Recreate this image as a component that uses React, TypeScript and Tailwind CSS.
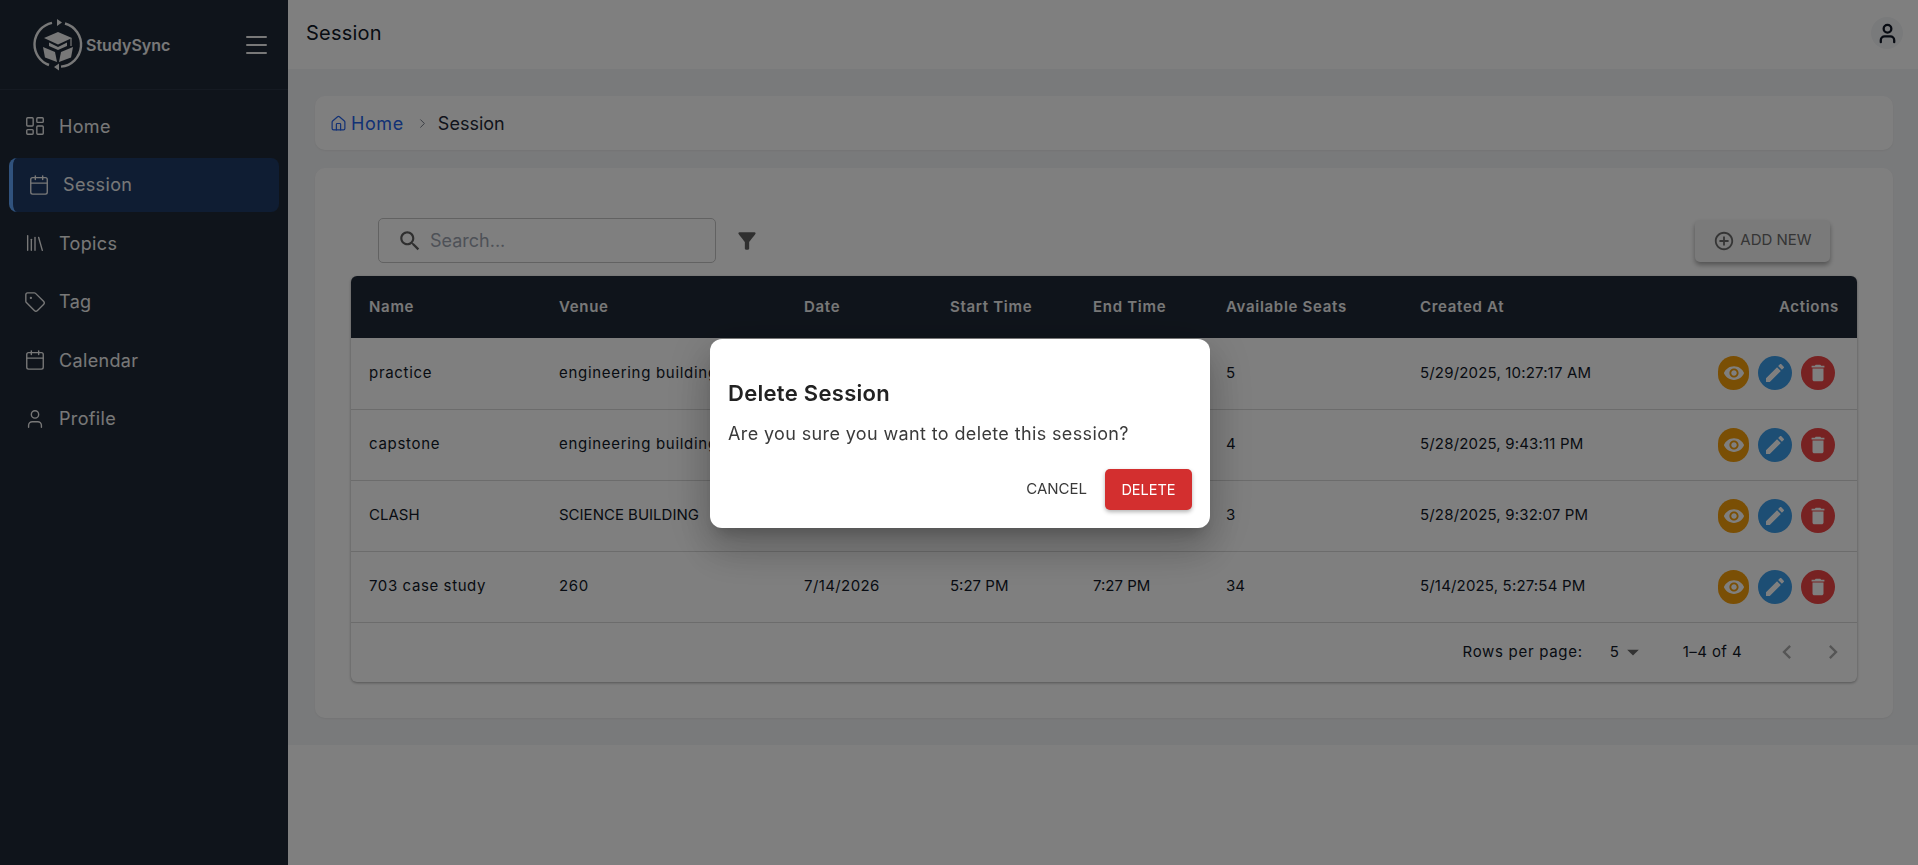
/**
 * Session list page with the delete confirmation dialog open
 */
import { Calendar, ChevronRight, House, LayoutDashboard, Library, Tag, User } from 'lucide-react';

const font = { fontFamily: 'Inter, "Liberation Sans", sans-serif' };

const navItems = [
  { label: 'Home', icon: LayoutDashboard },
  { label: 'Session', icon: Calendar, active: true },
  { label: 'Topics', icon: Library },
  { label: 'Tag', icon: Tag },
  { label: 'Calendar', icon: Calendar },
  { label: 'Profile', icon: User },
];

const rows = [
  { name: 'practice', venue: 'engineering building', date: '', start: '', end: '', seats: '5', created: '5/29/2025, 10:27:17 AM', track: 'tracking-[0.7px]' },
  { name: 'capstone', venue: 'engineering building', date: '', start: '', end: '', seats: '4', created: '5/28/2025, 9:43:11 PM', track: 'tracking-[0.7px]' },
  { name: 'CLASH', venue: 'SCIENCE BUILDING', date: '', start: '', end: '', seats: '3', created: '5/28/2025, 9:32:07 PM', track: 'tracking-normal' },
  { name: '703 case study', venue: '260', date: '7/14/2026', start: '5:27 PM', end: '7:27 PM', seats: '34', created: '5/14/2025, 5:27:54 PM', track: 'tracking-[0.6px]' },
];

const MuiIcon = ({ d, className }: { d: string; className?: string }) => (
  <svg viewBox="0 0 24 24" fill="currentColor" className={className}>
    <path d={d} />
  </svg>
);

const icons = {
  eye: 'M12 4.5C7 4.5 2.73 7.61 1 12c1.73 4.39 6 7.5 11 7.5s9.27-3.11 11-7.5c-1.73-4.39-6-7.5-11-7.5zM12 17c-2.76 0-5-2.24-5-5s2.24-5 5-5 5 2.24 5 5-2.24 5-5 5zm0-8c-1.66 0-3 1.34-3 3s1.34 3 3 3 3-1.34 3-3-1.34-3-3-3z',
  edit: 'M3 17.25V21h3.75L17.81 9.94l-3.75-3.75L3 17.25zM20.71 7.04c.39-.39.39-1.02 0-1.41l-2.34-2.34c-.39-.39-1.02-.39-1.41 0l-1.83 1.83 3.75 3.75 1.83-1.83z',
  trash: 'M6 19c0 1.1.9 2 2 2h8c1.1 0 2-.9 2-2V7H6v12zM19 4h-3.5l-1-1h-5l-1 1H5v2h14V4z',
  search: 'M15.5 14h-.79l-.28-.27C15.41 12.59 16 11.11 16 9.5 16 5.91 13.09 3 9.5 3S3 5.91 3 9.5 5.91 16 9.5 16c1.61 0 3.09-.59 4.23-1.57l.27.28v.79l5 4.99L20.49 19l-4.99-5zm-6 0C7.01 14 5 11.99 5 9.5S7.01 5 9.5 5 14 7.01 14 9.5 11.99 14 9.5 14z',
  filter: 'M4.25 5.61C6.27 8.2 10 13 10 13v6c0 .55.45 1 1 1h2c.55 0 1-.45 1-1v-6s3.72-4.8 5.74-7.39c.51-.66.04-1.61-.79-1.61H5.04c-.83 0-1.3.95-.79 1.61z',
  add: 'M13 7h-2v4H7v2h4v4h2v-4h4v-2h-4V7zm-1-5C6.48 2 2 6.48 2 12s4.48 10 10 10 10-4.48 10-10S17.52 2 12 2zm0 18c-4.41 0-8-3.59-8-8s3.59-8 8-8 8 3.59 8 8-3.59 8-8 8z',
  drop: 'M7 10l5 5 5-5z',
  left: 'M15.41 16.59L10.83 12l4.58-4.59L14 6l-6 6 6 6 1.41-1.41z',
  right: 'M8.59 16.59L13.17 12 8.59 7.41 10 6l6 6-6 6-1.41-1.41z',
};

const Logo = () => (
  <svg viewBox="0 0 50 52" className="w-[50px] h-[52px] text-[#f0f0f0]" fill="none">
    {/* circular arrows */}
    <path d="M19 3.8 A22 22 0 0 0 16 46" stroke="currentColor" strokeWidth="2.4" />
    <path d="M32 4.5 A22 22 0 0 1 28 47.6" stroke="currentColor" strokeWidth="2.4" />
    <path d="M24 0 L29 3.5 L24 7 Z M26 44.5 L21 48 L26 51.5 Z" fill="currentColor" />
    {/* cap */}
    <path d="M25 13 L39 19 L25 25.5 L11 19 Z" fill="currentColor" />
    <path d="M16 23.5 L25 28 L34 23.5 L34 27 L25 31 L16 27 Z" fill="currentColor" />
    <path d="M38 19 V27" stroke="currentColor" strokeWidth="1.2" />
    {/* box */}
    <path d="M10 28 L22 33 L24 43 L12 38.5 Z" fill="currentColor" />
    <path d="M40 28 L28 33 L26 43 L38 38.5 Z" fill="currentColor" />
  </svg>
);

const Sidebar = () => (
  <aside className="w-[288px] h-[865px] shrink-0 bg-[#1f2937] flex flex-col">
    <div className="h-[90px] shrink-0 flex items-center border-b border-[#2a3544] pl-[33px] pr-[21px]">
      <Logo />
      <span className="ml-[3px] text-[16px] font-semibold text-[#f0f0f0]">StudySync</span>
      <svg viewBox="0 0 21 18" className="ml-auto w-[21px] h-[18px] text-[#f0f0f0]" stroke="currentColor" strokeWidth="2" strokeLinecap="round">
        <path d="M1 1h19M1 9h19M1 17h19" />
      </svg>
    </div>
    <nav className="pt-[9px] px-[9px] flex flex-col gap-[4.5px]">
      {navItems.map(({ label, icon: Icon, active }) => (
        <div
          key={label}
          className={`h-[54px] flex items-center rounded-[8px] text-[18px] text-[#f0f0f0] tracking-[0.35px] ${
            active ? 'bg-[#1e3a66] border-l-[4px] border-[#60a5fa] pl-[15px]' : 'pl-[15px]'
          }`}
        >
          <Icon className="w-[22px] h-[22px] shrink-0" strokeWidth={1.5} />
          <span className="ml-[13px]">{label}</span>
        </div>
      ))}
    </nav>
  </aside>
);

const ActionButtons = () => (
  <div className="flex items-center justify-end gap-[9px] pr-[4px]">
    <button className="w-[31px] h-[34px] rounded-full bg-[#f59e0b] text-white flex items-center justify-center">
      <MuiIcon d={icons.eye} className="w-[22px] h-[22px]" />
    </button>
    <button className="w-[34px] h-[34px] rounded-full bg-[#3b9ce8] text-white flex items-center justify-center">
      <MuiIcon d={icons.edit} className="w-[24px] h-[24px]" />
    </button>
    <button className="w-[34px] h-[34px] rounded-full bg-[#ef4444] text-white flex items-center justify-center">
      <MuiIcon d={icons.trash} className="w-[22px] h-[22px]" />
    </button>
  </div>
);

const SessionTable = () => (
  <div className="ml-[36px] w-[1506px] rounded-[6px] bg-white shadow-[0_1px_3px_rgba(0,0,0,0.35)] overflow-hidden">
    <table className="w-full table-fixed text-[15px] text-[#111827]">
      <thead className="bg-[#1f2937] text-[#f0f0f0] tracking-[0.7px]">
        <tr className="h-[62px] text-left">
          <th className="w-[190px] pl-[18px] font-semibold">Name</th>
          <th className="w-[245px] pl-[18px] font-semibold">Venue</th>
          <th className="w-[146px] pl-[18px] font-semibold">Date</th>
          <th className="w-[143px] pl-[18px] font-semibold">Start Time</th>
          <th className="w-[133px] pl-[18px] font-semibold">End Time</th>
          <th className="w-[194px] pl-[18px] font-semibold">Available Seats</th>
          <th className="w-[455px] pl-[18px] font-semibold" colSpan={2}>
            <div className="flex justify-between pr-[18px]">
              <span>Created At</span>
              <span>Actions</span>
            </div>
          </th>
        </tr>
      </thead>
      <tbody>
        {rows.map((row) => (
          <tr key={row.name} className="h-[71px] border-b border-[#d8d8d8]">
            <td className={`pl-[18px] ${row.track}`}>{row.name}</td>
            <td className={`pl-[18px] whitespace-nowrap ${row.track}`}>{row.venue}</td>
            <td className="pl-[18px] tracking-[0.4px]">{row.date}</td>
            <td className="pl-[18px]">{row.start}</td>
            <td className="pl-[18px]">{row.end}</td>
            <td className="pl-[18px]">{row.seats}</td>
            <td className="pl-[18px]" colSpan={2}>
              <div className="flex items-center justify-between pr-[18px]">
                <span className="tracking-[0.17px]">{row.created}</span>
                <ActionButtons />
              </div>
            </td>
          </tr>
        ))}
      </tbody>
    </table>
    <div className="h-[59px] flex items-center justify-end text-[15px] text-[#111827] pr-[10px]">
      <span className="tracking-[0.7px]">Rows per page:</span>
      <span className="ml-[27px]">5</span>
      <MuiIcon d={icons.drop} className="w-[28px] h-[28px] text-[#666]" />
      <span className="ml-[36px] tracking-[0.4px]">1–4 of 4</span>
      <MuiIcon d={icons.left} className="ml-[31px] w-[28px] h-[28px] text-[#aaa]" />
      <MuiIcon d={icons.right} className="ml-[18px] w-[28px] h-[28px] text-[#aaa]" />
    </div>
  </div>
);

const DeleteDialog = () => (
  <div className="fixed inset-0 bg-black/50 flex items-start justify-center">
    <div className="mt-[339px] ml-[2px] w-[500px] h-[189px] bg-white rounded-[12px] shadow-[0_11px_15px_-7px_rgba(0,0,0,0.2),0_24px_38px_3px_rgba(0,0,0,0.14),0_9px_46px_8px_rgba(0,0,0,0.12)] px-[18px] pt-[39px]">
      <h2 className="text-[22px] leading-[30px] font-semibold text-[#222222] tracking-[0.3px]">Delete Session</h2>
      <p className="mt-[14px] text-[18px] leading-[24px] text-[#3a3a3a] tracking-[0.37px]">Are you sure you want to delete this session?</p>
      <div className="mt-[23px] flex items-center justify-end">
        <button className="text-[15px] text-[#3a3a3a] mr-[18px]">CANCEL</button>
        <button className="w-[87px] h-[41px] rounded-[5px] bg-[#d32f2f] text-white text-[14.5px] shadow-[0_2px_4px_rgba(0,0,0,0.3)]">DELETE</button>
      </div>
    </div>
  </div>
);

export default function App() {
  return (
    <div className="relative flex h-[865px] overflow-hidden bg-white" style={font}>
      <Sidebar />
      <main className="flex-1 min-w-0 flex flex-col">
        <header className="h-[69px] shrink-0 flex items-center justify-between bg-white pl-[18px] pr-[15px] pb-[3px] shadow-[0_1px_2px_rgba(0,0,0,0.06)]">
          <h1 className="text-[20px] text-[#111827] tracking-[0.2px]">Session</h1>
          <div className="w-[32px] h-[32px] rounded-full bg-[#f3f4f6] flex items-center justify-center">
            <User className="w-[23px] h-[23px] text-[#111827]" strokeWidth={2.4} />
          </div>
        </header>
        <div className="h-[676px] shrink-0 bg-[#f3f4f6] pl-[27px] pr-[25px] pt-[27px]">
          <div className="h-[54px] flex items-center rounded-[10px] bg-white pl-[15px] text-[18px] shadow-[0_1px_2px_rgba(0,0,0,0.05)]">
            <House className="w-[17px] h-[17px] text-[#2563eb]" strokeWidth={1.7} />
            <span className="ml-[4px] text-[#2563eb] tracking-[0.6px]">Home</span>
            <ChevronRight className="ml-[11px] w-[15px] h-[15px] text-[#6b7280]" strokeWidth={1.5} />
            <span className="ml-[8px] text-[#1f2937]">Session</span>
          </div>
          <div className="mt-[18px] h-[550px] rounded-[10px] bg-white pt-[50px] shadow-[0_1px_2px_rgba(0,0,0,0.05)]">
            <div className="h-[45px] flex items-center pl-[63px] pr-[63px]">
              <div className="w-[338px] h-[45px] flex items-center rounded-[5px] border border-[#c4c4c4] pl-[18px]">
                <MuiIcon d={icons.search} className="w-[26px] h-[26px] text-[#5f5f5f]" />
                <span className="ml-[7px] text-[18px] text-[#9ca3af]">Search...</span>
              </div>
              <MuiIcon d={icons.filter} className="ml-[18px] w-[26px] h-[26px] text-[#5f5f5f]" />
              <button className="ml-auto w-[135px] h-[42px] flex items-center justify-center rounded-[5px] bg-[#f5f5f5] text-[15px] text-[#6b6b6b] shadow-[0_3px_5px_rgba(0,0,0,0.35)]">
                <MuiIcon d={icons.add} className="w-[22px] h-[22px] mr-[5px]" />
                ADD NEW
              </button>
            </div>
            <div className="mt-[13px]">
              <SessionTable />
            </div>
          </div>
        </div>
      </main>
      <DeleteDialog />
    </div>
  );
}
